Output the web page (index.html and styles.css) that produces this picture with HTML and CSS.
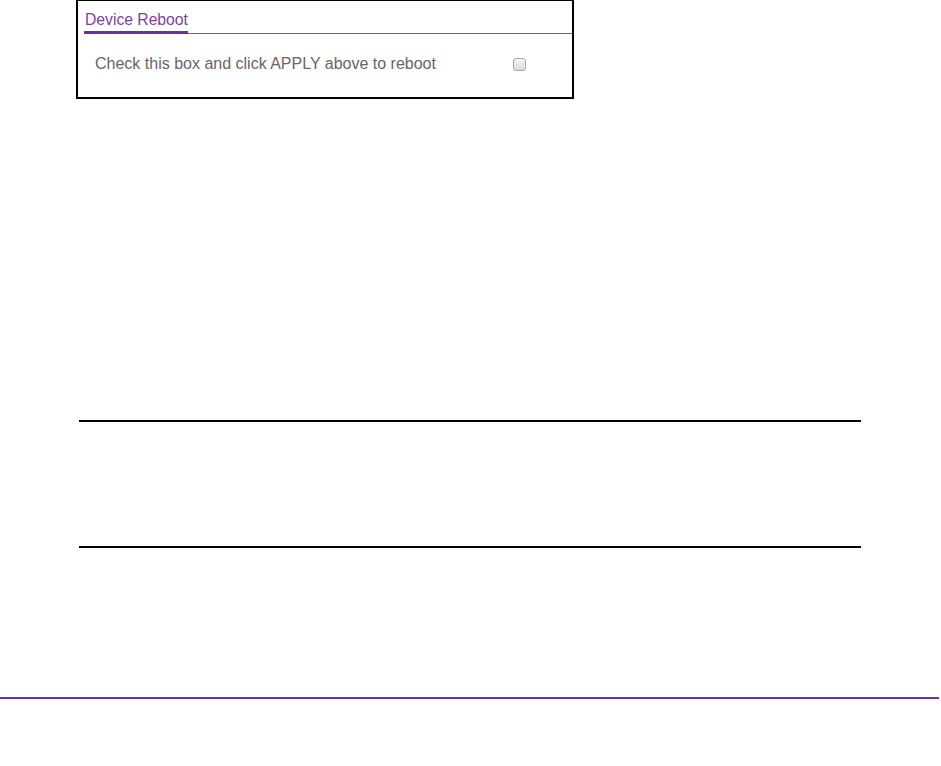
FILE: index.html
```html
<!DOCTYPE html>
<html>
<head>
<meta charset="utf-8">
<title>Device Reboot</title>
<link rel="stylesheet" href="styles.css">
</head>
<body>
<div class="panel">
  <div class="tabs">
    <span class="tab">Device Reboot</span>
  </div>
  <div class="row">
    <label class="label" for="reboot">Check this box and click APPLY above to reboot</label>
    <input class="check" type="checkbox" id="reboot">
  </div>
</div>
<div class="rule rule-top"></div>
<div class="rule rule-bottom"></div>
<div class="footer-rule"></div>
</body>
</html>
```
FILE: styles.css
```css
html, body {
  margin: 0;
  padding: 0;
  background: #fff;
}
body {
  font-family: "Liberation Sans", Arial, sans-serif;
  font-size: 16px;
  line-height: 18px;
}
.panel {
  box-sizing: border-box;
  margin-left: 76px;
  width: 498px;
  height: 99px;
  border: 2px solid #000;
  border-top-width: 1px;
  padding-left: 6px;
}
.tabs {
  display: flex;
  padding-top: 10px;
  border-bottom: 1px solid #8646bd;
}
.tab {
  color: #7b3fa6;
  font-size: 15.7px;
  padding: 0 0 2px 1px;
  width: 103px;
  border-bottom: 3px solid #7030a0;
  margin-bottom: -1px;
}
.row {
  display: grid;
  grid-template-columns: 418px 13px;
  margin-top: 21px;
  padding-left: 11px;
  align-items: start;
}
.label {
  color: #666;
}
.check {
  appearance: none;
  -webkit-appearance: none;
  margin: 3px 0 0 0;
  width: 13px;
  height: 13px;
  box-sizing: border-box;
  border: 1px solid #a9a9a9;
  border-radius: 3px;
  background: linear-gradient(#f4f4f4, #dcdcdc);
}
.rule {
  margin-left: 79px;
  width: 782px;
  border-top: 2px solid #000;
}
.rule-top {
  margin-top: 321px;
}
.rule-bottom {
  margin-top: 124px;
}
.footer-rule {
  margin-top: 149px;
  width: 939px;
  border-top: 2px solid #7030a0;
}
```
